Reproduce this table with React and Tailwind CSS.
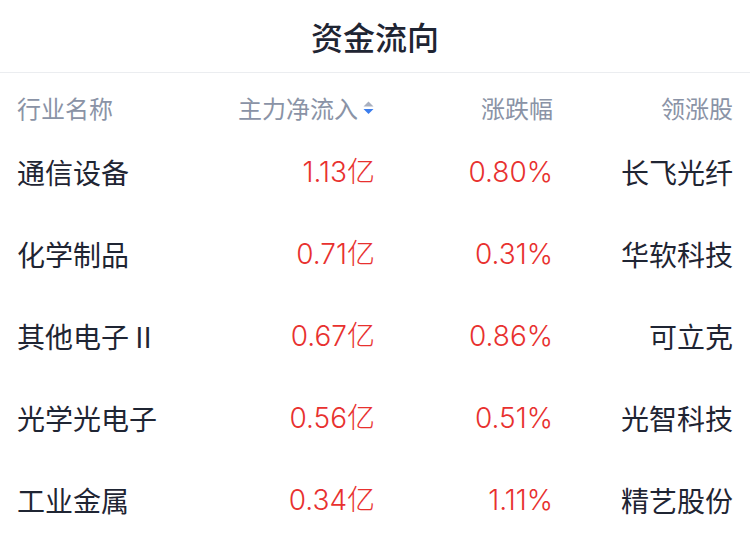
import React from "react";

const rows = [
  ["通信设备", "1.13亿", "0.80%", "长飞光纤"],
  ["化学制品", "0.71亿", "0.31%", "华软科技"],
  ["其他电子 II", "0.67亿", "0.86%", "可立克"],
  ["光学光电子", "0.56亿", "0.51%", "光智科技"],
  ["工业金属", "0.34亿", "1.11%", "精艺股份"],
];

function SortIcon() {
  return (
    <svg width="13" height="16" viewBox="0 0 13 16" className="ml-[4px]">
      <path d="M6.5 1.5 L11.5 6.5 L1.5 6.5 Z" fill="#a9b0bf" />
      <path d="M1.5 9 L11.5 9 L6.5 14 Z" fill="#3b7ded" />
    </svg>
  );
}

const num = { fontFamily: 'Inter, "Noto Sans CJK SC", sans-serif' };

export default function App() {
  return (
    <div
      className="w-[750px] h-[548px] bg-white overflow-hidden"
      style={{ fontFamily: '"Noto Sans CJK SC", sans-serif' }}
    >
      <div className="h-[73px] flex items-center justify-center border-b border-[#ebedf0]">
        <span className="text-[32px] font-medium text-[#1f2533] leading-none">资金流向</span>
      </div>
      <div className="px-[17px]">
        <div className="grid grid-cols-[180px_178px_178px_180px] h-[57.5px] pt-[21px] items-start text-[24px] leading-[28px] text-[#8a93a6]">
          <div>行业名称</div>
          <div className="flex items-center justify-end">
            <span>主力净流入</span>
            <SortIcon />
          </div>
          <div className="text-right">涨跌幅</div>
          <div className="text-right">领涨股</div>
        </div>
        {rows.map((r, i) => (
          <div
            key={i}
            className="grid grid-cols-[180px_178px_178px_180px] h-[82.2px] items-center text-[28px] leading-[32px]"
          >
            <div className="text-[#1f2533]">{r[0]}</div>
            <div className="text-right text-[#e8312f] font-light" style={num}>{r[1]}</div>
            <div className="text-right text-[#e8312f] font-light" style={num}>{r[2]}</div>
            <div className="text-right text-[#1f2533]">{r[3]}</div>
          </div>
        ))}
      </div>
    </div>
  );
}
